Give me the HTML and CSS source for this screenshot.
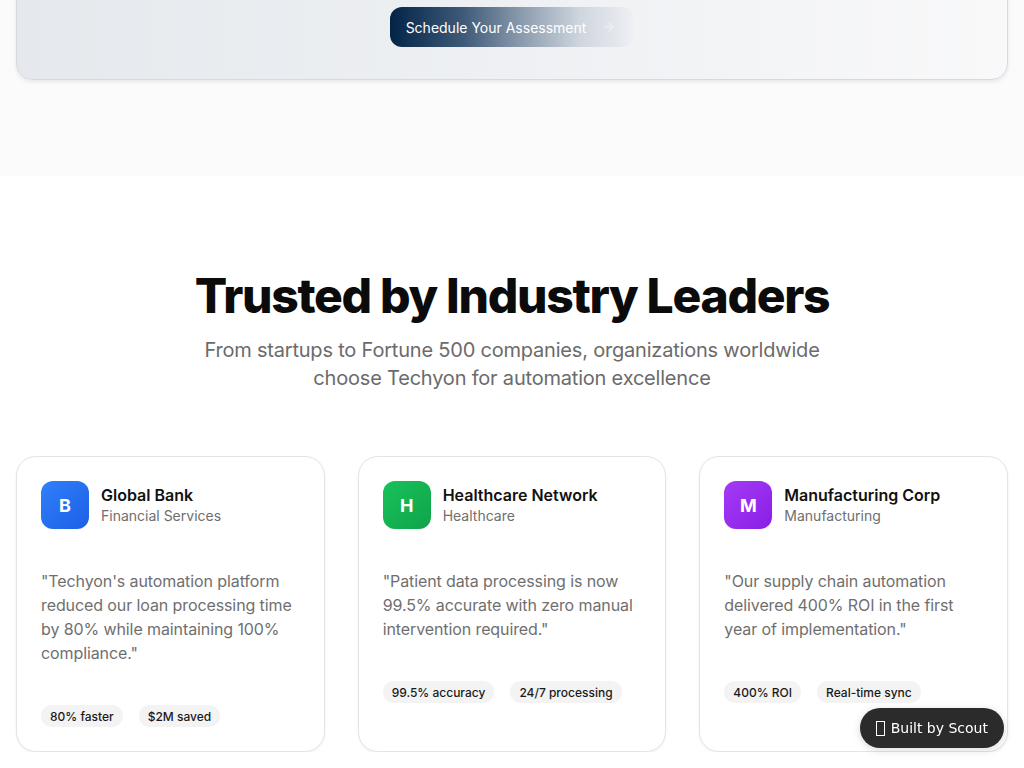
FILE: index.html
```html
<!DOCTYPE html>
<html lang="en">
<head>
<meta charset="utf-8">
<title>Techyon</title>
<link rel="stylesheet" href="styles.css">
</head>
<body>
<section class="cta-section">
  <div class="cta-card">
    <a class="cta-btn" href="#">Schedule Your Assessment
      <svg class="arrow" width="14" height="14" viewBox="0 0 24 24" fill="none" stroke="currentColor" stroke-width="2" stroke-linecap="round" stroke-linejoin="round"><path d="M5 12h14"/><path d="M12 5l7 7-7 7"/></svg>
    </a>
  </div>
</section>

<section class="trust">
  <h2 class="trust-title">Trusted by Industry Leaders</h2>
  <p class="trust-sub">From startups to Fortune 500 companies, organizations worldwide choose Techyon for automation excellence</p>

  <div class="cards">
    <article class="card">
      <div class="card-head">
        <div class="logo logo-blue">B</div>
        <div>
          <div class="name">Global Bank</div>
          <div class="industry">Financial Services</div>
        </div>
      </div>
      <p class="quote">"Techyon's automation platform reduced our loan processing time by 80% while maintaining 100% compliance."</p>
      <div class="tags"><span class="tag">80% faster</span><span class="tag">$2M saved</span></div>
    </article>
    <article class="card">
      <div class="card-head">
        <div class="logo logo-green">H</div>
        <div>
          <div class="name">Healthcare Network</div>
          <div class="industry">Healthcare</div>
        </div>
      </div>
      <p class="quote">"Patient data processing is now 99.5% accurate with zero manual intervention required."</p>
      <div class="tags"><span class="tag">99.5% accuracy</span><span class="tag">24/7 processing</span></div>
    </article>
    <article class="card">
      <div class="card-head">
        <div class="logo logo-purple">M</div>
        <div>
          <div class="name">Manufacturing Corp</div>
          <div class="industry">Manufacturing</div>
        </div>
      </div>
      <p class="quote">"Our supply chain automation delivered 400% ROI in the first year of implementation."</p>
      <div class="tags"><span class="tag">400% ROI</span><span class="tag">Real-time sync</span></div>
    </article>
  </div>
</section>

<a class="scout" href="#"><span class="tofu"></span>Built by Scout</a>
</body>
</html>
```

FILE: styles.css
```css
* { box-sizing: border-box; }
html, body { margin: 0; padding: 0; }
body {
  font-family: Inter, "Noto Sans", "Liberation Sans", sans-serif;
  background: #ffffff;
  color: #111;
  overflow: hidden;
}

.cta-section {
  background: #fbfbfb;
  padding: 0 16px 96px;
}
.cta-card {
  margin-top: -60px;
  padding: 66px 0 32px;
  border-radius: 16px;
  background: linear-gradient(90deg, #e5e9ed 0%, #eef0f3 50%, #f9f9fa 100%);
  border: 1px solid #d6dadf;
  box-shadow: 0 2px 4px rgba(0,0,0,0.08);
  display: flex;
  justify-content: center;
}
.cta-btn {
  display: inline-flex;
  align-items: center;
  gap: 16px;
  height: 40px;
  padding: 0 18px 0 16px;
  border-radius: 12px;
  color: #fff;
  text-decoration: none;
  font-size: 14px;
  font-weight: 400;
  background: linear-gradient(90deg, #032447 0%, #3e5a78 30%, #8e9eb0 55%, #cfd6de 78%, #eef0f3 100%);
}
.arrow { color: #eef2f6; }

.trust {
  padding: 91px 16px 0;
}
.trust-title {
  margin: 0;
  text-align: center;
  font-size: 48px;
  line-height: 58px;
  font-weight: 800;
  letter-spacing: -1.3px;
  color: #0b0b0b;
}
.trust-sub {
  margin: 11px auto 64px;
  max-width: 640px;
  text-align: center;
  font-size: 20px;
  line-height: 28px;
  letter-spacing: -0.2px;
  color: #6b6b6b;
}

.cards {
  display: grid;
  grid-template-columns: repeat(3, 1fr);
  gap: 33px;
}
.card {
  border: 1px solid #e4e4e4;
  border-radius: 20px;
  padding: 24px 24px 24px;
  background: #fff;
  box-shadow: 0 1px 3px rgba(0,0,0,0.06);
}
.card-head {
  display: flex;
  align-items: center;
  gap: 12px;
}
.logo {
  width: 48px;
  height: 48px;
  border-radius: 12px;
  display: flex;
  align-items: center;
  justify-content: center;
  color: #fff;
  font-weight: 700;
  font-size: 18px;
}
.logo-blue { background: linear-gradient(135deg, #2f80fb, #1d5fe6); }
.logo-green { background: linear-gradient(135deg, #18c25a, #10a34a); }
.logo-purple { background: linear-gradient(135deg, #a43bf5, #8a1ee6); }
.name {
  font-size: 16px;
  line-height: 22px;
  font-weight: 600;
  color: #111;
}
.industry {
  font-size: 14px;
  line-height: 20px;
  color: #6f6f6f;
}
.quote {
  margin: 40px 0 40px;
  font-size: 16px;
  line-height: 24px;
  letter-spacing: -0.1px;
  color: #6f6f6f;
}
.tags {
  display: flex;
  gap: 16px;
}
.tag {
  display: inline-flex;
  align-items: center;
  height: 22px;
  padding: 0 9px;
  border-radius: 999px;
  background: #f3f3f3;
  font-size: 12px;
  font-weight: 500;
  color: #1a1a1a;
}

.scout {
  position: fixed;
  right: 20px;
  bottom: 20px;
  height: 40px;
  padding: 0 16px 0 16px;
  border-radius: 20px;
  background: #2b2b2b;
  color: #fff;
  text-decoration: none;
  font-family: "DejaVu Sans", sans-serif;
  font-size: 14px;
  display: inline-flex;
  align-items: center;
  gap: 6px;
  box-shadow: 0 2px 8px rgba(0,0,0,0.15);
}
.tofu {
  display: inline-block;
  width: 9px;
  height: 15px;
  border: 1px solid #fff;
}
```
